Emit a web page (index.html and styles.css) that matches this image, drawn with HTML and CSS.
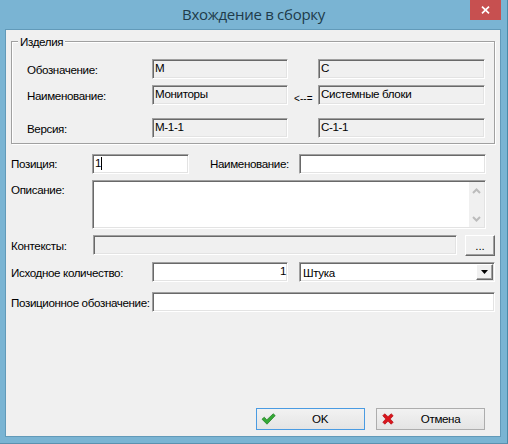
FILE: index.html
```html
<!DOCTYPE html>
<html lang="ru">
<head>
<meta charset="utf-8">
<title>Вхождение в сборку</title>
<link rel="stylesheet" href="styles.css">
</head>
<body>
<div class="window">
  <header class="titlebar">
    <h1 class="title">Вхождение в сборку</h1>
    <button class="close" aria-label="Закрыть"><svg width="9" height="8" viewBox="0 0 9 8"><path d="M1 .6 8 7.4M8 .6 1 7.4" stroke="#fff" stroke-width="1.7"/></svg></button>
  </header>
  <main class="client">
    <section class="group">
      <h2 class="legend">Изделия</h2>
      <div class="pair">
        <span class="label">Обозначение:</span><div class="field gray">М</div><span class="arrow"></span><div class="field gray">С</div>
      </div>
      <div class="pair">
        <span class="label">Наименование:</span><div class="field gray">Мониторы</div><span class="arrow">&lt;--=</span><div class="field gray">Системные блоки</div>
      </div>
      <div class="pair version">
        <span class="label">Версия:</span><div class="field gray">М-1-1</div><span class="arrow"></span><div class="field gray">С-1-1</div>
      </div>
    </section>
    <div class="row position">
      <span class="label">Позиция:</span><div class="field">1<i class="caret"></i></div><span class="label">Наименование:</span><div class="field"></div>
    </div>
    <div class="row description">
      <span class="label">Описание:</span>
      <div class="field area">
        <div class="scroll">
          <svg width="9" height="6" viewBox="0 0 9 6"><path d="M1 5 4.5 1.5 8 5" fill="none" stroke="#bcbcbc" stroke-width="2"/></svg>
          <svg width="9" height="6" viewBox="0 0 9 6"><path d="M1 1 4.5 4.5 8 1" fill="none" stroke="#bcbcbc" stroke-width="2"/></svg>
        </div>
      </div>
    </div>
    <div class="row contexts">
      <span class="label">Контексты:</span><div class="field gray"></div><button class="more">...</button>
    </div>
    <div class="row quantity">
      <span class="label">Исходное количество:</span><div class="field number">1</div>
      <div class="field combo"><span>Штука</span><span class="drop"><svg width="7" height="4" viewBox="0 0 7 4"><path d="M0 0h7L3.5 4z"/></svg></span></div>
    </div>
    <div class="row designation">
      <span class="label">Позиционное обозначение:</span><div class="field"></div>
    </div>
    <footer class="actions">
      <button class="action primary"><svg width="15" height="12" viewBox="0 0 15 12"><path d="M1 6.2 3.3 4.2 5.8 6.9 12.2 .8 14.2 2.6 6 11.2z" fill="#35a936" stroke="#278529" stroke-width=".8"/></svg><span>OK</span></button>
      <button class="action"><svg width="12" height="12" viewBox="0 0 12 12"><path d="M.8 2.7 2.7.8 6 3.7 9.2.8 11.2 2.7 8.2 6l3 3.2-2 2L6 8.2 2.8 11.2.8 9.2 3.8 6z" fill="#d9161d" stroke="#b50d14" stroke-width=".7"/></svg><span>Отмена</span></button>
    </footer>
  </main>
</div>
</body>
</html>
```
FILE: styles.css
```css
* { box-sizing: border-box; }
body { margin: 0; font: 11.6px/14px "Liberation Sans", Arial, sans-serif; letter-spacing: -.36px; color: #000; }
button { font: inherit; color: inherit; letter-spacing: inherit; padding: 0; }
.window {
  width: 508px; height: 444px; background: #7ab4d3;
  border-right: 1px solid #488ba9; border-bottom: 1px solid #5b91af;
  padding: 0 6px 6px 5px;
}
.titlebar { height: 29px; display: flex; justify-content: flex-end; align-items: flex-start; }
.title { margin: 4px 145px 0 0; font: 15px/20px "Open Sans", sans-serif; letter-spacing: -.28px; color: #203b4a; white-space: nowrap; }
.close { width: 31px; height: 20px; border: 0; background: #c75050; display: flex; align-items: center; justify-content: center; }
.client {
  height: 408px; border: 1px solid #629ab9; background: #f0f0f0;
  padding: 11px 5px 0 5px; display: flex; flex-direction: column;
}
.label { white-space: nowrap; }
.field {
  height: 20px; background: #fff; padding: 1px 2px; white-space: nowrap;
  border: 1px solid; border-color: #a0a0a0 #fff #fff #a0a0a0;
  box-shadow: inset 1px 1px #696969, inset -1px -1px #e3e3e3;
}
.gray { background: #f0f0f0; }
.group {
  height: 103px; flex: none; border: 1px solid #a0a0a0; width: 484px;
  box-shadow: inset 1px 1px #fff, 1px 1px #fff;
}
.legend { width: max-content; margin: -7px 0 0 6px; padding: 0 2px; background: #f0f0f0; font: inherit; }
.pair { display: grid; grid-template-columns: 125px 136px 30px 167px; margin: 10px 0 0 15px; height: 20px; }
.pair + .pair { margin-top: 6px; }
.pair.version { margin-top: 13px; }
.pair .label { padding-top: 4px; }
.arrow { padding: 7px 0 0 6px; font-size: 10px; letter-spacing: .1px; }
.row { display: grid; }
.row > .label { padding-top: 3px; }
.position { grid-template-columns: 81px 97px 110px 187px; margin-top: 10px; }
.position .label:nth-child(3) { padding-left: 21px; }
.caret { display: inline-block; width: 1px; height: 13px; background: #000; vertical-align: -3px; }
.description { grid-template-columns: 81px 394px; margin-top: 6px; }
.area { height: 49px; padding: 1px; display: flex; justify-content: flex-end; }
.scroll { width: 15px; background: #f0f0f0; display: flex; flex-direction: column; align-items: center; justify-content: space-between; padding: 6px 0 5px; }
.contexts { grid-template-columns: 82px 364px 30px; margin-top: 6px; }
.contexts > .label, .quantity > .label, .designation > .label { padding-top: 4px; }
.more { margin-left: 8px; width: 30px; height: 21px; background: #f0f0f0; border: 1px solid; border-color: #fff #696969 #696969 #fff; box-shadow: inset -1px -1px #a0a0a0; letter-spacing: 0; }
.quantity { grid-template-columns: 141px 136px 196px; margin-top: 6px; }
.number { text-align: right; padding-right: 1px; }
.combo { margin-left: 11px; width: 196px; display: flex; justify-content: space-between; padding: 1px 1px 1px 3px; line-height: 17px; }
.drop { width: 17px; height: 16px; background: #f0f0f0; border: 1px solid; border-color: #fff #696969 #696969 #fff; box-shadow: inset -1px -1px #a0a0a0; display: flex; align-items: center; justify-content: center; }
.designation { grid-template-columns: 141px 343px; margin-top: 10px; }
.actions { margin-top: 96px; display: flex; gap: 11px; padding-left: 245px; }
.action { width: 109px; height: 22px; border: 1px solid #adadad; background: linear-gradient(#f2f2f2, #e4e4e4); display: flex; align-items: center; padding-left: 5px; }
.action span { flex: 1; text-align: center; padding-left: 3px; }
.primary { border-color: #4a9be2; padding-left: 4px; }
.primary span { padding-left: 0; }
```
